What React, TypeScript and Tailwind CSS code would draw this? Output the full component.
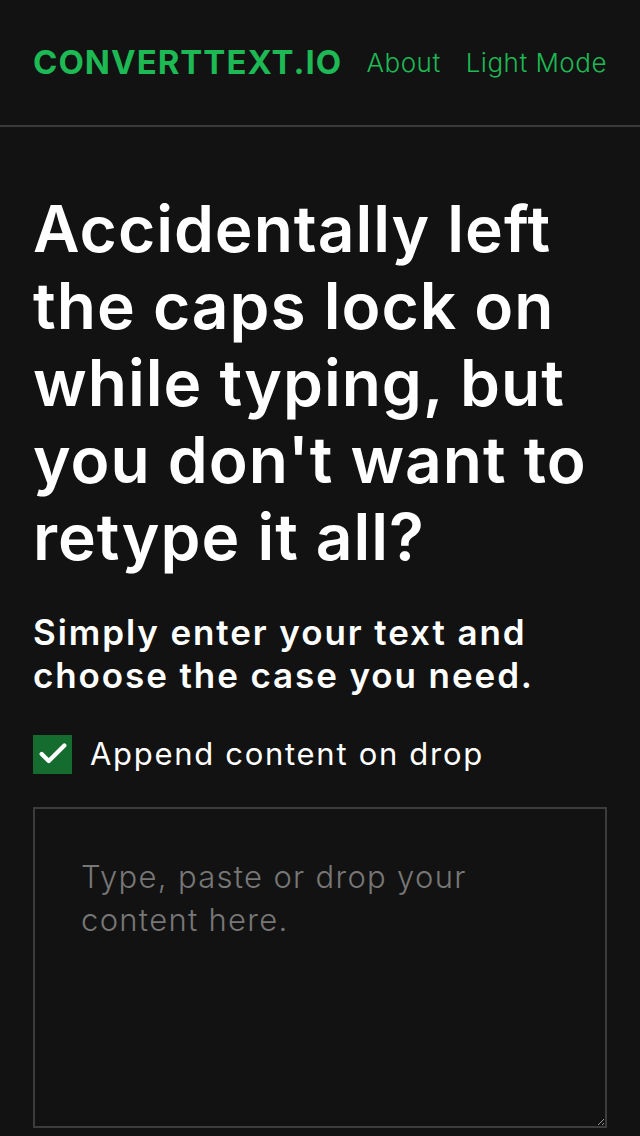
import { Check } from 'lucide-react';

export default function App() {
  return (
    <div className="min-h-[1136px] bg-[#121212] font-['Inter',sans-serif] text-white">
      {/* Header */}
      <header className="flex h-[127px] items-center justify-between border-b-2 border-[#3a3a3a] px-[33px]">
        <span className="text-[33px] font-bold tracking-[1px] text-[#1db954]">CONVERTTEXT.IO</span>
        <nav className="flex items-center gap-[25px] text-[26px] font-light tracking-[0.5px] text-[#1db954]">
          <a>About</a>
          <a>Light Mode</a>
        </nav>
      </header>

      <main className="px-[33px] pt-[63px]">
        <h1 className="text-[64px] font-semibold leading-[77px] tracking-[1px]">
          Accidentally left the caps lock on while typing, but you don't want to retype it all?
        </h1>
        <p className="mt-[36px] text-[35px] font-semibold leading-[43px] tracking-[1.9px]">
          Simply enter your text and choose the case you need.
        </p>
        <label className="mt-[34px] flex items-center gap-[18px]">
          <span className="flex h-[39px] w-[39px] items-center justify-center bg-[#146c2e]">
            <Check className="h-[34px] w-[34px] text-white" strokeWidth={3} />
          </span>
          <span className="text-[31px] tracking-[1.7px]">Append content on drop</span>
        </label>
        <textarea
          className="mt-[29px] block h-[321px] w-full resize-y border-2 border-[#3c3c3c] bg-transparent px-[46px] py-[46px] text-[31px] font-light leading-[43px] tracking-[1.3px] text-white outline-none placeholder:text-[#777]"
          placeholder="Type, paste or drop your content here."
        />
      </main>
    </div>
  );
}
